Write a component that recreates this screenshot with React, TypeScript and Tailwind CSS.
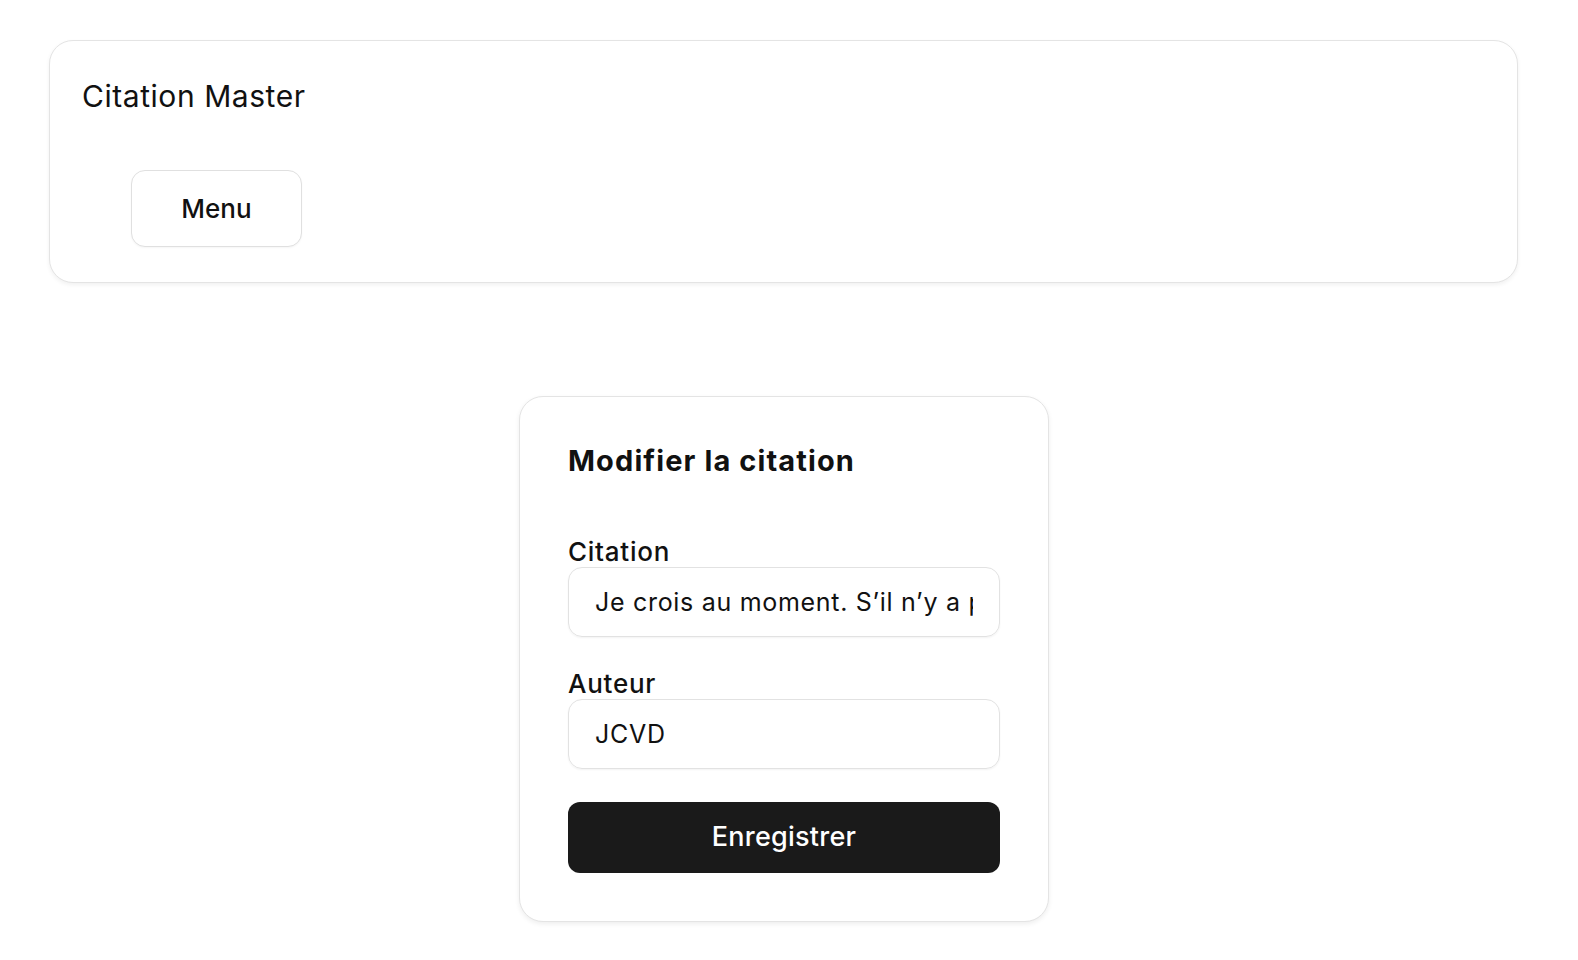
import { useState } from "react";

export default function App() {
  const [quote, setQuote] = useState(
    "Je crois au moment. S’il n’y a pas de moment, à ce moment-là, il n’y a pas de moment.",
  );
  const [author, setAuthor] = useState("JCVD");

  return (
    <div className="min-h-screen w-[1568px] bg-white pt-10 font-['Inter',sans-serif] text-[#111]">
      {/* Header */}
      <header className="mx-[49px] w-[1469px] rounded-[24px] border border-[#e4e4e4] bg-white px-8 pt-[35px] pb-[35px] shadow-[0_2px_4px_rgba(0,0,0,0.06)]">
        <h1 className="text-[30px] leading-[40px] font-normal tracking-[0.55px]">
          Citation Master
        </h1>
        <button className="mt-[54px] ml-[49px] flex h-[77px] w-[171px] items-center justify-center rounded-[14px] border border-[#e0e0e0] bg-white text-[26px] font-medium shadow-[0_1px_2px_rgba(0,0,0,0.04)]">
          Menu
        </button>
      </header>

      {/* Edit form */}
      <div className="mx-auto mt-[113px] w-[530px] rounded-[24px] border border-[#e4e4e4] bg-white p-12 shadow-[0_2px_5px_rgba(0,0,0,0.07)]">
        <h2 className="text-[29px] leading-[32px] font-bold tracking-[1.1px]">
          Modifier la citation
        </h2>

        <label className="mt-[64px] mb-1 block text-[26px] leading-[22px] font-medium tracking-[0.75px]">
          Citation
        </label>
        <input
          value={quote}
          onChange={(e) => setQuote(e.target.value)}
          className="block h-[70px] w-full rounded-[14px] border border-[#e2e2e2] px-[26px] text-[25px] tracking-[0.7px] text-[#111] shadow-[0_1px_2px_rgba(0,0,0,0.05)] outline-none"
        />

        <label className="mt-9 mb-1 block text-[26px] leading-[22px] font-medium tracking-[0.75px]">
          Auteur
        </label>
        <input
          value={author}
          onChange={(e) => setAuthor(e.target.value)}
          className="block h-[70px] w-full rounded-[14px] border border-[#e2e2e2] px-[26px] text-[25px] tracking-[0.7px] text-[#111] shadow-[0_1px_2px_rgba(0,0,0,0.05)] outline-none"
        />

        <button className="mt-[33px] flex h-[71px] w-full items-center justify-center rounded-[12px] bg-[#1a1a1a] text-[27px] font-medium tracking-[0.25px] text-white">
          Enregistrer
        </button>
      </div>
    </div>
  );
}
